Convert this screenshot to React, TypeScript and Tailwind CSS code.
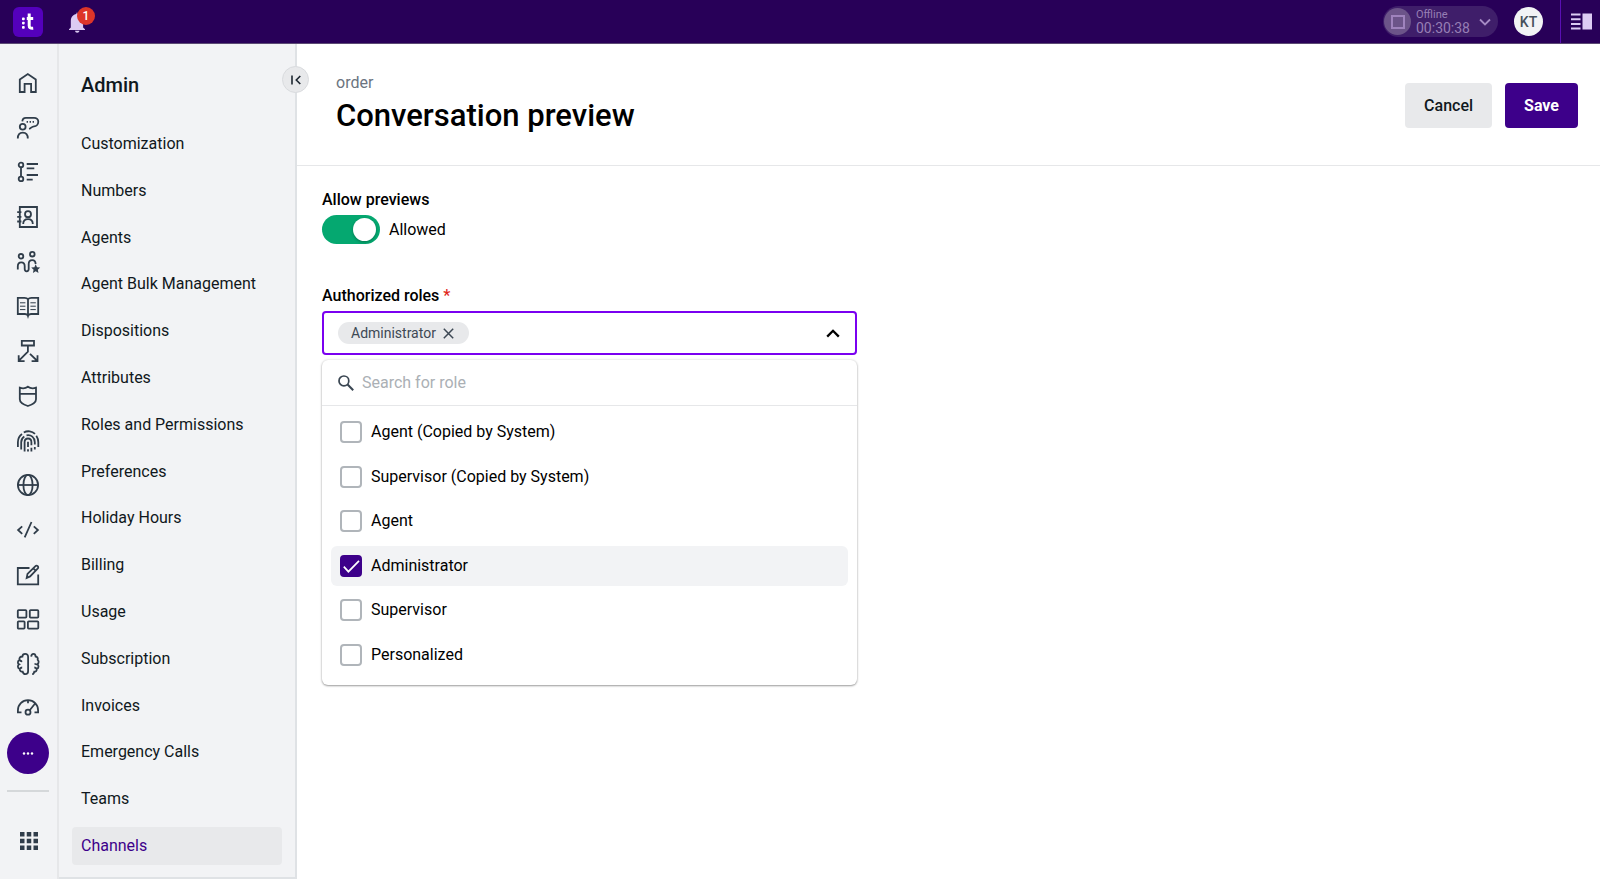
import { useState, type ReactNode } from 'react';

const navItems = [
  'Customization',
  'Numbers',
  'Agents',
  'Agent Bulk Management',
  'Dispositions',
  'Attributes',
  'Roles and Permissions',
  'Preferences',
  'Holiday Hours',
  'Billing',
  'Usage',
  'Subscription',
  'Invoices',
  'Emergency Calls',
  'Teams',
  'Channels',
];

const roles = [
  'Agent (Copied by System)',
  'Supervisor (Copied by System)',
  'Agent',
  'Administrator',
  'Supervisor',
  'Personalized',
];

const railIcons: { label: string; icon: ReactNode }[] = [
  {
    label: 'Home',
    icon: <path d="M2.8 7.4 10.8 2l8 5.4V20h-4.7v-8.2H7.6V20H2.8z" />,
  },
  {
    label: 'Conversations',
    icon: (
      <>
        <path d="M5.3 4.4C5.5 2 6.7.8 8.9.8h8.2c2.4 0 4.2 1.7 4.2 4s-1.8 4.5-4.2 4.5c-2.2 0-3 1.9-5 2.6" />
        <circle cx="5.7" cy="9.8" r="2.9" />
        <path d="M.8 21.6c0-3.8 2-5.9 5-5.9s5 2.1 5 5.9" />
        <path d="M9.6 4.8h1.4M12.6 4.8h1.4M15.6 4.8h1.4" />
      </>
    ),
  },
  {
    label: 'Activities',
    icon: (
      <>
        <circle cx="4" cy="3.9" r="2.3" />
        <circle cx="4" cy="17.9" r="2.3" />
        <path d="M4 6.2v9.4M9.7 3H21M9.7 7.3h7.6M9.7 14H21M9.7 18.7h6" />
      </>
    ),
  },
  {
    label: 'Contacts',
    icon: (
      <>
        <path d="M2.8 1H20v20H2.8zM.2 6.2h4.2M.2 10.9h4.2M.2 15.5h4.2" />
        <circle cx="11" cy="8.2" r="3" />
        <path d="M6.2 18c0-3.2 2-4.8 4.8-4.8s4.8 1.6 4.8 4.8" />
      </>
    ),
  },
  {
    label: 'Teams',
    icon: (
      <>
        <circle cx="4" cy="5.3" r="2.3" />
        <circle cx="15.3" cy="3.2" r="2.3" />
        <path d="M.8 18.6v-3.3c0-2.4 1.4-4 3.5-4s3.4 1.6 3.4 4v2.8c0 1.5.8 2.2 2 2.2s2-.7 2-2.2v-5c0-2.3 1.4-3.9 3.5-3.9s3.4 1.6 3.4 3.8" />
        <path
          d="m18.7 13.2 1.3 3 3.200.3-2.400 2.200.7 3.200-2.800-1.700-2.800 1.700.7-3.200-2.400-2.200 3.200-.3z"
          fill="currentColor"
          stroke="none"
        />
      </>
    ),
  },
  {
    label: 'Knowledge base',
    icon: (
      <>
        <path d="M11 3.4C10.3 2.2 9 1.800 7.500 1.800H.8V18h6.900c1.800 0 2.900.6 3.300 1.900.4-1.300 1.500-1.900 3.300-1.900h6.900V1.800h-6.700c-1.500 0-2.800.4-3.500 1.600zM11 3.400v16" />
        <path
          d="M3 6.800h5.400M3 10.200h5.400M3 13.600h5.400M13.400 6.800h5.400M13.400 10.200h5.400M13.400 13.600h5.400"
          strokeWidth="1"
        />
      </>
    ),
  },
  {
    label: 'Routing',
    icon: (
      <path d="M4.8.9H17v4.600H4.800zM10.900 5.500v6.200l-9.200 9.100M1.700 15.300v5.900h5.900M13 13.800l7.400 7.200M20.500 15.300v5.900h-5.900" />
    ),
  },
  {
    label: 'Security',
    icon: (
      <path d="M2.800 2.700c3 1.100 5.700.8 8.100-1 2.400 1.800 5.100 2.100 8.100 1v11.500c0 2.800-3.800 5.400-8.100 6.800-4.300-1.400-8.100-4-8.100-6.800zM2.800 8.800H19" />
    ),
  },
  {
    label: 'Identity',
    icon: (
      <path d="M.9 17v-4.800C.9 8.600 2.500 5.800 5 4M6.800 2.500c3.600-2.100 8.400-1.400 11.200 1.300M19.300 5.700c1.300 1.900 2 4 2 6.500V17M4.200 19.500v-7.300c0-2.600 1.200-4.600 3.100-5.800M9.500 5.400c4.500-1 8.300 2 8.300 6.800v2.300M17.800 17v2.500M7.600 21.400v-9.200c0-2.200 1.400-3.700 3.400-3.700s3.400 1.500 3.400 3.700v3M14.400 17.800v3.600M11 11.800V17M11 19.200v2.400" />
    ),
  },
  {
    label: 'Languages',
    icon: (
      <>
        <circle cx="11" cy="11" r="10.1" />
        <ellipse cx="11" cy="11" rx="4.6" ry="10.1" />
        <path d="M.9 11h20.200" />
      </>
    ),
  },
  {
    label: 'Developers',
    icon: <path d="M5.200 7.300 1.100 11l4.100 3.800M14.500 3 7.700 18.400M16.800 7.300l4.100 3.700-4.100 3.800" />,
  },
  {
    label: 'Compose',
    icon: (
      <>
        <path d="M12.500 4H.8v16.400h20.400v-9.900" />
        <path d="m9.700 13.900.8-4 7.700-7.600c.8-.8 1.800-.8 2.500-.1s.7 1.700-.1 2.500l-7.500 7.700zM16.300 4.300l2.400 2.400" />
      </>
    ),
  },
  {
    label: 'Dashboards',
    icon: (
      <>
        <rect x=".8" y="2.1" width="8.6" height="7.5" rx=".8" />
        <rect x="12.8" y="2.1" width="8.5" height="7.5" rx=".8" />
        <rect x=".8" y="13.4" width="6.8" height="7.2" rx=".8" />
        <rect x="10.9" y="13.4" width="10.4" height="7.2" rx=".8" />
      </>
    ),
  },
  {
    label: 'AI',
    icon: (
      <>
        <path d="M8.200.9C6.400.9 5.500 2 5.400 3.500 3.200 3.500 2 4.900 2.500 6.900 1.100 7.700.7 8.700.9 9.800c.1.700.6 1.200 1.300 1.500-.9.600-1.400 1.400-1.300 2.400.1 1.200.8 1.900 1.800 2.200 0 1.900 1.200 2.900 3 2.800.3 1.500 1.200 2.400 2.700 2.400 1.600 0 2.700-1.100 2.700-2.900V3.800C11.100 2 10 .9 8.200.9z" />
        <path d="M14.200 3.600c.1-1.700.9-2.700 2.300-2.700 1.300 0 2 1 2.100 2.600 1.700.2 2.500 1.500 2.100 3.300.9.800 1.200 1.800.8 2.900-.2.700-.6 1.200-1.200 1.600.9.600 1.300 1.400 1.200 2.400-.1 1.200-.7 1.900-1.700 2.200 0 1.900-1 2.900-2.500 2.800-.3 1.500-.9 2.400-2.100 2.400M2.700 7.100c.6.900 1.500 1.300 2.500 1.100M19.900 11.300c-.9.100-1.700-.1-2.300-.8M3 15.800c.5-.9 1.200-1.300 2.200-1.300M19.500 15.800c-.5-.9-1.200-1.300-2.200-1.300" />
      </>
    ),
  },
  {
    label: 'Performance',
    icon: (
      <>
        <path d="M4.500 14.400H.9v-2C.9 6.600 5.300 2.200 11 2.200s10.100 4.400 10.100 10.200v2h-3.600M11 2.200v3M12.700 12.200l5.200-6.400" />
        <circle cx="11" cy="14.2" r="2.5" />
      </>
    ),
  },
];

function TopBar() {
  return (
    <header className="flex h-11 items-center border-b border-[#5b4a73] bg-[#280058] pl-[13px]">
      <a href="#home" aria-label="Home" className="flex size-[30px] items-center justify-center rounded-md bg-[#5400bb]">
        <svg viewBox="0 0 30 30" className="size-[30px]" aria-hidden="true">
          <g fill="#fff">
            <rect x="9" y="10.5" width="2.7" height="2.7" rx=".8" />
            <rect x="9" y="14.7" width="2.7" height="2.7" rx=".8" />
            <rect x="9" y="19" width="2.7" height="2.7" rx=".8" />
          </g>
          <path d="M16.200 6.500v12.200c0 2 1.200 2.800 4 2.500M13.800 11.600h6.400" fill="none" stroke="#fff" strokeWidth="3" />
        </svg>
      </a>

      <button type="button" aria-label="Notifications" className="relative ml-6 flex size-[22px] items-center justify-center">
        <svg viewBox="0 0 22 22" className="size-[22px]" fill="#dccbf3" aria-hidden="true">
          <path d="M3.800 16.500V10C3.800 6.200 6 3.500 9.400 3V1.800h1.200V3c3.500.5 5.500 3.200 5.500 7v6.500l1.900 1.700v.9H2v-.9zM8 19.800h4.500c-.2 1.200-1.100 1.900-2.300 1.900S8.200 21 8 19.800z" />
        </svg>
        <span className="absolute -top-1 left-[10px] flex size-[18px] items-center justify-center rounded-full bg-[#dd3529] text-xs font-medium text-white">
          1
        </span>
      </button>

      <div className="ml-auto flex h-full items-center">
        <button
          type="button"
          aria-label="Agent status: Offline"
          className="flex h-[31px] w-[115px] items-center rounded-full bg-[#3f1e6a] pl-px text-left text-[#977eb5]"
        >
          <span className="flex size-[27px] items-center justify-center rounded-full bg-[#6c5489]">
            <span className="size-[14px] border-2 border-[#9f83bd]" />
          </span>
          <span className="ml-[5px] flex flex-col">
            <span className="text-[11px] leading-[13px]">Offline</span>
            <span className="text-sm leading-[15px]">00:30:38</span>
          </span>
          <svg viewBox="0 0 12 8" className="ml-[9px] h-2 w-3" fill="none" stroke="#a58bc4" strokeWidth="1.8" aria-hidden="true">
            <path d="m1 1.500 5 5 5-5" />
          </svg>
        </button>
        <button
          type="button"
          aria-label="Account"
          className="ml-4 flex size-[29px] items-center justify-center rounded-full bg-[#f2f3f5] text-sm font-medium text-[#46505b]"
        >
          KT
        </button>
        <div className="ml-[17px] flex h-full w-10 items-center justify-end border-l border-[#5a0fb4] pr-2">
          <button type="button" aria-label="Toggle side panel">
            <svg viewBox="0 0 21 17" className="h-[17px] w-[21px]" fill="#dccbf3" aria-hidden="true">
              <path d="M0 .5h9.500v2H0zM0 5.200h9.500v2H0zM0 9.900h9.500v2H0zM0 14.500h9.500v2H0zM11.500.5H21v16h-9.500z" />
            </svg>
          </button>
        </div>
      </div>
    </header>
  );
}

function Rail() {
  return (
    <nav
      aria-label="Apps"
      className="flex w-[59px] shrink-0 flex-col items-center border-r-2 border-[#e6e7e9] bg-[#f2f3f5] pt-7 pr-px pb-[29px] text-[#303d4a]"
    >
      <ul className="flex flex-1 flex-col justify-between">
        {railIcons.map((item) => (
          <li key={item.label}>
            <a href="#" aria-label={item.label} className="block size-[22px]">
              <svg
                viewBox="0 0 22 22"
                className="size-[22px] overflow-visible"
                fill="none"
                stroke="currentColor"
                strokeWidth="1.8"
                aria-hidden="true"
              >
                {item.icon}
              </svg>
            </a>
          </li>
        ))}
      </ul>
      <button
        type="button"
        aria-label="More"
        className="mt-3 flex size-[42px] items-center justify-center rounded-full bg-[#3d008a]"
      >
        <svg viewBox="0 0 12 3" className="h-[3px] w-3" fill="#fff" aria-hidden="true">
          <circle cx="2" cy="1.5" r="1.2" />
          <circle cx="6" cy="1.5" r="1.2" />
          <circle cx="10" cy="1.5" r="1.2" />
        </svg>
      </button>
      <div className="mt-4 h-0.5 w-[42px] bg-[#d5d8da]" />
      <button type="button" aria-label="All apps" className="mt-10 ml-0.5">
        <svg viewBox="0 0 18 18" className="size-[18px]" fill="currentColor" aria-hidden="true">
          <path d="M0 0h4.500v4.500H0zM6.750 0h4.500v4.500h-4.500zM13.500 0H18v4.500h-4.500zM0 6.750h4.500v4.500H0zM6.750 6.750h4.500v4.500h-4.500zM13.500 6.750H18v4.500h-4.500zM0 13.500h4.500V18H0zM6.750 13.500h4.500V18h-4.500zM13.500 13.500H18V18h-4.500z" />
        </svg>
      </button>
    </nav>
  );
}

function Sidebar() {
  return (
    <aside className="relative flex w-[238px] shrink-0 flex-col border-r-2 border-b-2 border-[#dfe2e5] bg-[#f2f3f5] px-[13px] pt-[27px] pb-3">
      <h2 className="pl-[9px] text-xl font-medium text-[#101820]">Admin</h2>
      <button
        type="button"
        aria-label="Collapse menu"
        className="absolute top-[22px] -right-[14px] z-10 flex size-[27px] items-center justify-center rounded-full border border-[#d9dbde] bg-[#e8e9eb]"
      >
        <svg viewBox="0 0 12 12" className="size-3" fill="none" stroke="#1c2630" strokeWidth="1.6" aria-hidden="true">
          <path d="M2 1.500v9M10.300 2 6.300 6l4 4" />
        </svg>
      </button>
      <nav aria-label="Admin" className="mt-[26px] flex flex-1 flex-col justify-between">
        {navItems.map((item) => (
          <a
            key={item}
            href="#"
            aria-current={item === 'Channels' ? 'page' : undefined}
            className={`flex h-[38px] items-center rounded px-[9px] ${
              item === 'Channels' ? 'bg-[#e8e9eb] text-[#3d008a]' : 'text-[#101820]'
            }`}
          >
            {item}
          </a>
        ))}
      </nav>
    </aside>
  );
}

function RoleSelect() {
  const [selected, setSelected] = useState<string[]>(['Administrator']);
  const [open, setOpen] = useState(true);

  const toggle = (role: string) => {
    setSelected((prev) => (prev.includes(role) ? prev.filter((r) => r !== role) : [...prev, role]));
  };

  return (
    <div className="relative mt-[3px] w-full max-w-[535px]">
      <div className="flex min-h-11 items-center gap-2 rounded border-2 border-[#7a00f0] bg-white px-[14px]">
        {selected.map((role) => (
          <span
            key={role}
            className="flex h-[22px] items-center gap-[7px] rounded-full bg-[#e8e9eb] pr-[15px] pl-[13px] text-sm text-[#3d4854]"
          >
            {role}
            <button type="button" aria-label={`Remove ${role}`} onClick={() => toggle(role)}>
              <svg viewBox="0 0 11 11" className="size-[11px]" fill="none" stroke="currentColor" strokeWidth="1.5" aria-hidden="true">
                <path d="m.8.8 9.400 9.400M10.200.8.8 10.200" />
              </svg>
            </button>
          </span>
        ))}
        <button
          type="button"
          aria-label="Toggle roles"
          aria-expanded={open}
          className="ml-auto flex size-4 items-center justify-center"
          onClick={() => setOpen(!open)}
        >
          <svg viewBox="0 0 14 9" className="h-[9px] w-[14px]" fill="none" stroke="#000" strokeWidth="2.3" aria-hidden="true">
            <path d="m1.200 7.600 5.800-5.800 5.800 5.800" />
          </svg>
        </button>
      </div>

      {open && (
        <div className="absolute inset-x-0 top-full mt-[5px] rounded-md bg-white pb-[10px] shadow-[0_1px_2px_rgba(0,0,0,0.35),0_0_3px_rgba(0,0,0,0.14)]">
          <div className="flex h-[46px] items-center border-b border-[#e6e7e9] px-4">
            <svg viewBox="0 0 16 16" className="size-4 shrink-0" fill="none" stroke="#3a4652" aria-hidden="true">
              <circle cx="5.9" cy="5.9" r="4.9" strokeWidth="1.7" />
              <path d="m9.600 9.600 5.600 5.600" strokeWidth="2.1" />
            </svg>
            <input
              type="text"
              aria-label="Search for role"
              placeholder="Search for role"
              className="ml-2 min-w-0 flex-1 bg-transparent text-base outline-none placeholder:text-[#abb0b5]"
            />
          </div>
          <div className="flex h-[269px] flex-col justify-between px-[9px] pt-[6px]">
            {roles.map((role) => {
              const checked = selected.includes(role);
              return (
                <label
                  key={role}
                  className={`flex h-10 items-center rounded-md px-[9px] ${checked ? 'bg-[#f2f3f5]' : ''}`}
                >
                  <span className="relative flex size-[22px]">
                    <input
                      type="checkbox"
                      checked={checked}
                      onChange={() => toggle(role)}
                      className="size-[22px] appearance-none rounded border-2 border-[#b0b5ba] bg-white checked:border-[#3d008a] checked:bg-[#3d008a]"
                    />
                    {checked && (
                      <svg
                        viewBox="0 0 22 22"
                        className="pointer-events-none absolute inset-0 size-[22px]"
                        fill="none"
                        stroke="#fff"
                        strokeWidth="1.7"
                        aria-hidden="true"
                      >
                        <path d="m3.800 11.700 4.600 5L19 5.800" />
                      </svg>
                    )}
                  </span>
                  <span className="ml-[9px]">{role}</span>
                </label>
              );
            })}
          </div>
        </div>
      )}
    </div>
  );
}

export default function App() {
  const [allowed, setAllowed] = useState(true);

  return (
    <div className="flex min-h-screen flex-col bg-white font-[Roboto,sans-serif] text-base text-black">
      <TopBar />
      <div className="flex flex-1">
        <Rail />
        <Sidebar />
        <main className="min-w-0 flex-1">
          <div className="flex items-start justify-between border-b border-[#e6e7e9] pt-[27px] pr-[22px] pb-7 pl-[39px]">
            <div>
              <p className="text-[#6b7480]">order</p>
              <h1 className="text-[31px] leading-[42px] font-medium">Conversation preview</h1>
            </div>
            <div className="mt-3 flex gap-[13px]">
              <button type="button" className="h-[45px] rounded bg-[#e8e9eb] px-[19px] font-medium text-[#101820]">
                Cancel
              </button>
              <button type="button" className="h-[45px] rounded bg-[#3d008a] px-[19px] font-bold text-white">
                Save
              </button>
            </div>
          </div>

          <div className="px-[25px] pt-[22px]">
            <p className="font-medium">Allow previews</p>
            <label className="mt-[3px] flex items-center gap-[9px]">
              <span className="relative flex h-[29px] w-[58px]">
                <input
                  type="checkbox"
                  role="switch"
                  checked={allowed}
                  onChange={(e) => setAllowed(e.target.checked)}
                  className="peer h-[29px] w-[58px] appearance-none rounded-full bg-[#abb0b5] checked:bg-[#05a870]"
                />
                <span className="pointer-events-none absolute top-[3px] left-[3px] size-[23px] rounded-full bg-white shadow-[0_1px_3px_rgba(0,0,0,0.3)] peer-checked:left-[31px]" />
              </span>
              Allowed
            </label>

            <p className="mt-10 font-medium">
              Authorized roles <span className="text-[#e0271b]">*</span>
            </p>
            <RoleSelect />
          </div>
        </main>
      </div>
    </div>
  );
}
